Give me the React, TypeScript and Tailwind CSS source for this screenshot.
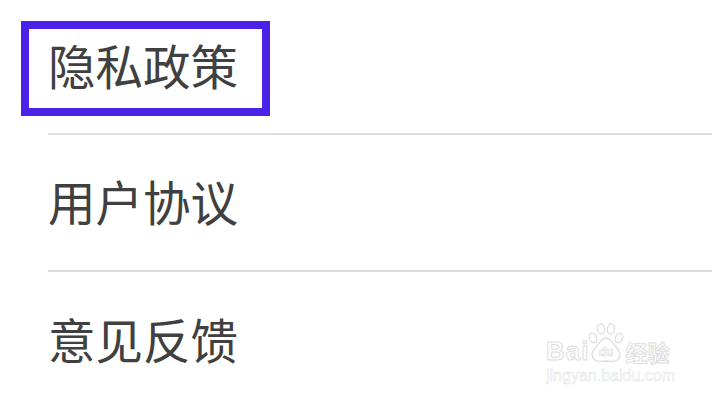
const rows = ['用户协议', '意见反馈'];

function Watermark() {
  return (
    <div className="absolute left-[546px] top-[323px] w-[130px] text-white [-webkit-text-stroke:1px_#dedede]">
      <div className="flex items-end h-[40px]">
        <span className="text-[26px] leading-[24px] font-bold tracking-[1px] font-['Liberation_Sans',sans-serif]">Bai</span>
        <svg viewBox="0 0 40 40" className="w-[40px] h-[40px] shrink-0 -ml-[3px]" fill="none" stroke="#dedede" strokeWidth="1.3">
          <ellipse cx="7" cy="15" rx="3.6" ry="5" transform="rotate(-20 7 15)" />
          <ellipse cx="15" cy="6" rx="3.6" ry="5" transform="rotate(-8 15 6)" />
          <ellipse cx="25" cy="6" rx="3.6" ry="5" transform="rotate(8 25 6)" />
          <ellipse cx="33" cy="15" rx="3.6" ry="5" transform="rotate(20 33 15)" />
          <path d="M20 15c-5 0-6 5-10 9-4 4-5 7-3 11 2 4 7 4 13 3 6 1 11 1 13-3 2-4 1-7-3-11-4-4-5-9-10-9z" />
          <text x="20" y="33" textAnchor="middle" fontSize="12" fontWeight="700" fontFamily="'Liberation Sans', sans-serif" fill="#ffffff" stroke="#dedede" strokeWidth="0.7">du</text>
        </svg>
        <span className="text-[22px] leading-[24px] font-bold -ml-[1px] font-['Noto_Sans_CJK_SC',sans-serif]">经验</span>
      </div>
      <div className="mt-[6px] text-[16px] leading-[14px] whitespace-nowrap [-webkit-text-stroke:0.5px_#e2e2e2] font-['Liberation_Sans',sans-serif]">jingyan.baidu.com</div>
    </div>
  );
}

export default function App() {
  return (
    <div className="relative w-[712px] h-[400px] overflow-hidden bg-white font-['Noto_Sans_CJK_SC',sans-serif] text-[47.5px] text-[#404040]">
      <div className="pl-[48px]">
        <div className="h-[135px] flex items-center border-b-2 border-[#dddddd]">
          <span className="leading-none -mt-[4px]">隐私政策</span>
        </div>
        {rows.map(row => (
          <div key={row} className="h-[137px] flex items-center border-b-2 border-[#dddddd] last:border-b-0">
            <span className="leading-none -mt-[3px]">{row}</span>
          </div>
        ))}
      </div>
      <div className="absolute left-[21px] top-[21px] w-[249px] h-[95px] border-[8px] border-[#4a22ea]" />
      <Watermark />
    </div>
  );
}
